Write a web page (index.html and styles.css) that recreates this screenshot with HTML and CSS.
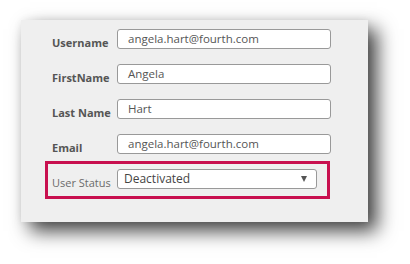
FILE: index.html
```html
<!DOCTYPE html>
<html>
<head>
    <title>User Details</title>
    <meta charset="UTF-8">
    <link rel="stylesheet" href="styles.css">
</head>
<body>
    <div class="panel">
        <div class="form-row">
            <label>Username</label>
            <div class="field">angela.hart@fourth.com</div>
        </div>
        <div class="form-row">
            <label>FirstName</label>
            <div class="field">Angela</div>
        </div>
        <div class="form-row">
            <label>Last Name</label>
            <div class="field">Hart</div>
        </div>
        <div class="form-row">
            <label>Email</label>
            <div class="field">angela.hart@fourth.com</div>
        </div>
        <div class="highlight">
            <label class="plain">User Status</label>
            <div class="select">
                <span>Deactivated</span>
                <span class="arrow"></span>
            </div>
        </div>
    </div>
</body>
</html>
```

FILE: styles.css
```css
body {
    margin: 0;
    padding: 20px 0 42px 21px;
    background: #fff;
    font-family: "Open Sans", Arial, sans-serif;
}
.panel {
    width: 347px;
    height: 193px;
    padding-top: 9px;
    background: #efefef;
    box-shadow: 9px 9px 18px rgba(0, 0, 0, 0.75), 0 0 8px rgba(0, 0, 0, 0.06);
}
.form-row {
    display: flex;
    align-items: flex-start;
    height: 20px;
    padding-left: 31px;
    margin-bottom: 15px;
}
label {
    width: 65px;
    padding-top: 4px;
    font-size: 11px;
    line-height: 20px;
    font-weight: bold;
    color: #555;
}
label.plain {
    font-weight: normal;
    color: #6b6b6b;
}
.field {
    box-sizing: border-box;
    width: 214px;
    height: 20px;
    padding: 0 10px;
    border: 1px solid #999;
    border-radius: 3px;
    background: #fff;
    font-size: 11.5px;
    line-height: 18px;
    color: #555;
}
.highlight {
    display: flex;
    align-items: flex-start;
    box-sizing: border-box;
    width: 285px;
    height: 38px;
    margin: -8px 0 0 24px;
    padding: 5px 0 0 4px;
    border: 3px solid #c8104f;
}
.select {
    box-sizing: border-box;
    display: flex;
    justify-content: space-between;
    align-items: center;
    width: 200px;
    height: 20px;
    padding: 0 9px 0 6px;
    border: 1px solid #999;
    border-radius: 3px;
    background: #fff;
    font-size: 12px;
    line-height: 18px;
    color: #444;
}
.arrow {
    width: 0;
    height: 0;
    border-left: 3px solid transparent;
    border-right: 3px solid transparent;
    border-top: 6px solid #555;
}
```
